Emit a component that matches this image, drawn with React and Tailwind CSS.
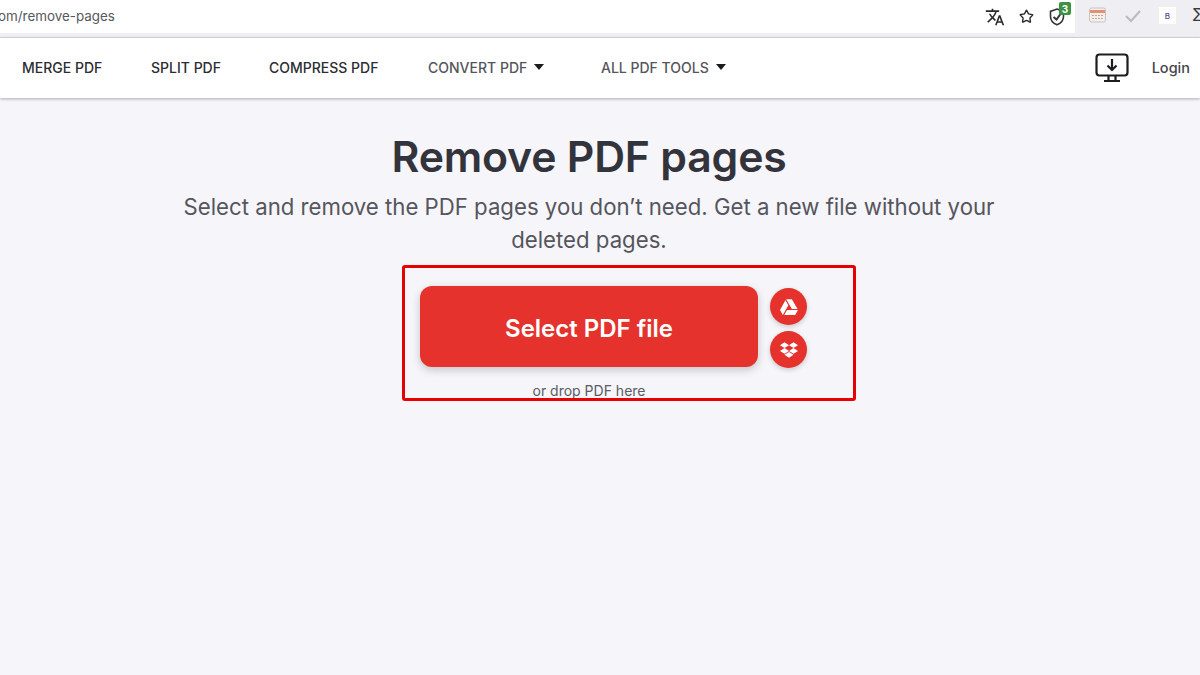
import React from 'react';
import { FaGoogleDrive, FaDropbox } from 'react-icons/fa';
import { MdTranslate } from 'react-icons/md';
import { Star } from 'lucide-react';

const font = "font-['Inter','Liberation_Sans',sans-serif]";

const NavItem = ({ children, caret, className = '' }) => (
  <a className={`flex items-center text-[14px] font-medium leading-none ${className}`}>
    {children}
    {caret && <span className="ml-[7px] mt-[-2px] h-0 w-0 border-x-[5px] border-t-[6px] border-x-transparent border-t-[#1a1a1f]"></span>}
  </a>
);

const ToolbarIcons = () => (
  <div className="ml-auto flex h-full w-[125px] items-center bg-[#eeeef3] relative">
    <div className="absolute left-[-120px] top-0 flex h-[33px] w-[118px] items-center rounded-r-full bg-white">
      <MdTranslate className="ml-[30px] text-[20px] text-[#2a2a2e]" />
      <Star size={15} strokeWidth={2.2} className="ml-[14px] text-[#2a2a2e]" />
      <svg width="18" height="20" viewBox="0 0 18 20" className="ml-[14px] mt-[1px]" fill="none" stroke="#33363a" strokeWidth="1.6">
        <path d="M9 2l6.5 2.4v5c0 4-2.6 6.8-6.5 8.4-3.900-1.600-6.500-4.400-6.500-8.400v-5z" />
        <path d="M5.500 10l3 2.500 4-5.500" strokeWidth="2" />
      </svg>
      <span className="absolute left-[104px] top-[2px] flex h-[13px] w-[12px] items-center justify-center rounded-[2px] bg-[#3f9142] text-[10px] font-bold leading-none text-white">3</span>
    </div>
  </div>
);

const App = () => {
  return (
    <div className={`relative flex min-h-[675px] flex-col overflow-hidden bg-[#f5f5fa] ${font}`}>
      {/* browser toolbar */}
      <div className="flex h-[33px] items-center bg-white">
        <span className="ml-[-2px] text-[13.4px] leading-none text-[#55585c]">om/remove-pages</span>
        <ToolbarIcons />
        <div className="absolute left-[1089px] top-[7px] flex items-center">
          <svg width="18" height="17" viewBox="0 0 18 17">
            <rect x="0.500" y="1" width="16" height="14" rx="2" fill="#f3eeea" stroke="#c9c4c2" />
            <rect x="1" y="3" width="15" height="3" fill="#e58f78" />
            <path d="M3 8.500h11M3 11.500h11" stroke="#c2a79c" strokeDasharray="2 1" />
          </svg>
          <svg width="18" height="14" viewBox="0 0 18 14" fill="none" stroke="#b9bbbf" strokeWidth="2" className="ml-[17px]">
            <path d="M2 7l5 5 9-10" />
          </svg>
          <span className="ml-[17px] flex h-[17px] w-[17px] items-center justify-center bg-white text-[8px] font-medium text-[#5b4a9e]">B</span>
          <span className="ml-[16px] text-[17px] leading-none text-[#3a3a3e]">Σ</span>
        </div>
      </div>
      <div className="h-[5px] bg-[#eeeef3] border-b border-[#d8d8de]"></div>

      {/* site nav */}
      <nav className="relative flex h-[60px] items-center bg-white pl-[22px] pr-[10px] shadow-[0_1px_3px_rgba(0,0,0,0.3)]">
        <NavItem className="w-[129px] text-[#2c2d33]">MERGE PDF</NavItem>
        <NavItem className="w-[118px] text-[#2c2d33]">SPLIT PDF</NavItem>
        <NavItem className="w-[159px] text-[#2c2d33]">COMPRESS PDF</NavItem>
        <NavItem caret className="w-[173px] text-[#54555b]">CONVERT PDF</NavItem>
        <NavItem caret className="text-[#54555b]">ALL PDF TOOLS</NavItem>
        <svg width="34" height="30" viewBox="0 0 34 30" fill="none" stroke="#1d1d20" strokeWidth="2.200" className="ml-auto">
          <rect x="1.500" y="1.500" width="31" height="21" rx="3" />
          <path d="M17 6v11M12.500 12.500l4.500 4.500 4.500-4.500M13.500 23v4.500M20.500 23v4.500M9 28h16" />
        </svg>
        <span className="ml-[23px] text-[14.500px] font-medium text-[#44454b]">Login</span>
      </nav>

      {/* tool header */}
      <main className="flex flex-col items-center pr-[22px] pt-[33px]">
        <h1 className="text-[42.750px] font-semibold leading-[52px] tracking-[-0.2px] text-[#33333b]">Remove PDF pages</h1>
        <p className="mt-[7px] w-[840px] text-center text-[22.200px] leading-[33px] text-[#55555d]">
          Select and remove the PDF pages you don’t need. Get a new file without your deleted pages.
        </p>
        <div className="mt-[30px] flex items-start pl-[49px]">
          <button className="h-[81px] w-[338px] rounded-[12px] bg-[#e5322d] pt-[5px] text-[24px] font-semibold text-white shadow-[0_3px_8px_rgba(0,0,0,0.2)]">
            Select PDF file
          </button>
          <div className="ml-[12px] flex flex-col gap-[6px] pt-[2px]">
            <span className="flex h-[37px] w-[37px] items-center justify-center rounded-full bg-[#e5322d] shadow-[0_2px_5px_rgba(0,0,0,0.18)]">
              <FaGoogleDrive className="text-[18px] text-white" />
            </span>
            <span className="flex h-[37px] w-[37px] items-center justify-center rounded-full bg-[#e5322d] shadow-[0_2px_5px_rgba(0,0,0,0.18)]">
              <FaDropbox className="text-[18px] text-white" />
            </span>
          </div>
        </div>
        <p className="mt-[14px] text-[14px] leading-[18px] text-[#5c5c64]">or drop PDF here</p>
      </main>

      {/* annotation drawn over the screenshot */}
      <div className="absolute left-[402px] top-[265px] h-[136px] w-[454px] rounded-[3px] border-[3px] border-[#e60000]"></div>
    </div>
  );
};

export default App;
